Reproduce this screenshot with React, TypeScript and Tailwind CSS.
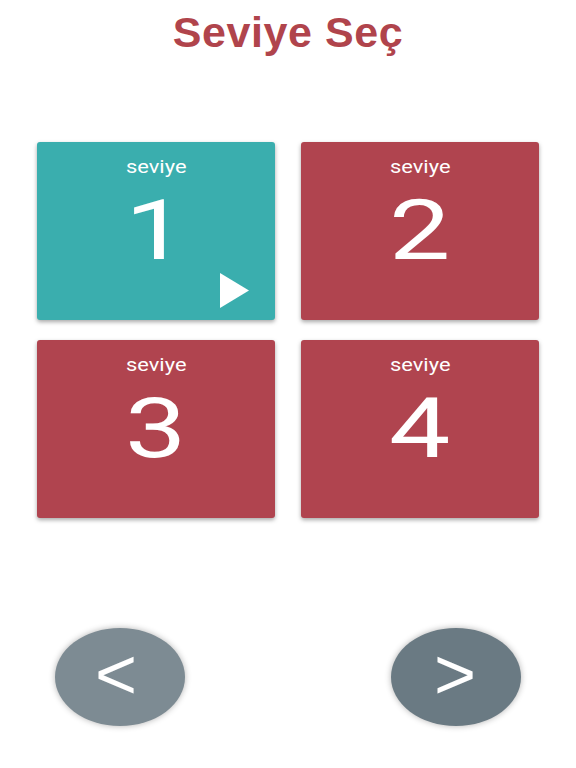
import React from 'react';

const levels = [1, 2, 3, 4];

function LevelCard({ n, active }: { n: number; active?: boolean }) {
  return (
    <div
      className={`relative h-[178px] rounded-[3px] flex flex-col items-center text-white shadow-[0_2px_4px_rgba(0,0,0,0.35)] ${
        active ? 'bg-[#3aaeae]' : 'bg-[#b0444f]'
      }`}
    >
      <div className="mt-[14px] text-[19px] leading-[22px] scale-x-[1.15]">seviye</div>
      <div className="mt-[17px] text-[84px] leading-[72px] scale-x-[1.3]">{n}</div>
      {active && (
        <svg className="absolute left-[183px] top-[131px]" width="29" height="35" viewBox="0 0 29 35">
          <polygon points="0,0 29,17.5 0,35" fill="white" />
        </svg>
      )}
    </div>
  );
}

export default function App() {
  return (
    <div className="w-[576px] h-[768px] bg-white flex flex-col" style={{ fontFamily: 'Roboto, "Noto Sans", sans-serif' }}>
      <h1
        className="mt-[8px] text-center text-[43px] leading-[48px] font-bold text-[#b0444c] tracking-[0.6px]"
        style={{ fontFamily: '"Liberation Sans", Arial, sans-serif' }}
      >
        Seviye Seç
      </h1>
      <div className="mt-[86px] mx-[37px] grid grid-cols-2 gap-x-[26px] gap-y-[20px]">
        {levels.map((n) => (
          <LevelCard key={n} n={n} active={n === 1} />
        ))}
      </div>
      <div className="mt-[110px] flex justify-between px-[55px]">
        <button className="w-[130px] h-[98px] rounded-[50%] bg-[#7d8b93] text-white text-[72px] leading-none flex items-center justify-center shadow-[0_0_6px_rgba(0,0,0,0.3)]" style={{ fontFamily: '"Liberation Sans", Arial, sans-serif' }}>
          <span className="-mt-[6px] -ml-[8px]">&lt;</span>
        </button>
        <button className="w-[130px] h-[98px] rounded-[50%] bg-[#6a7a83] text-white text-[72px] leading-none flex items-center justify-center shadow-[0_0_6px_rgba(0,0,0,0.3)]" style={{ fontFamily: '"Liberation Sans", Arial, sans-serif' }}>
          <span className="-mt-[6px] -ml-[2px]">&gt;</span>
        </button>
      </div>
    </div>
  );
}
